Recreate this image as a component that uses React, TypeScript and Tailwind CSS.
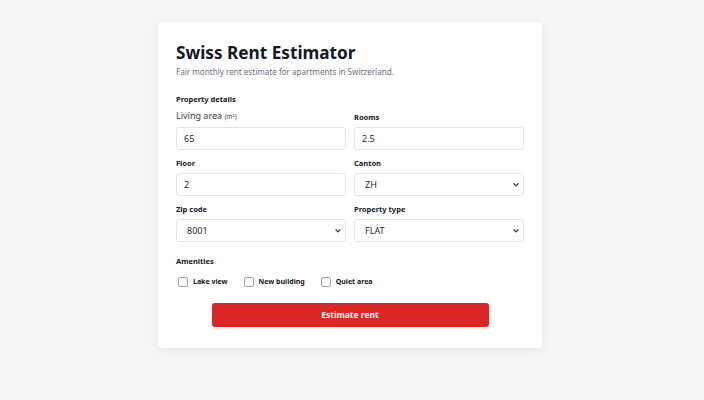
import React from "react"

const inputCls =
  "block h-[23px] w-full rounded-[3px] border border-[#e3e5e8] bg-white px-[7px] text-[9px] text-[#1f2937] outline-none"

function Label({ children }: { children: React.ReactNode }) {
  return <label className="mb-[5px] block text-[7.5px] font-bold leading-[10px] text-[#111827]">{children}</label>
}

function Select({ value, options }: { value: string; options: string[] }) {
  return (
    <div className="relative">
      <select className={inputCls + " appearance-none pl-[10px]"} defaultValue={value}>
        {options.map((o) => (
          <option key={o}>{o}</option>
        ))}
      </select>
      <svg
        className="pointer-events-none absolute right-[5px] top-1/2 h-[5px] w-[6px] -translate-y-1/2"
        viewBox="0 0 6 5"
        fill="none"
      >
        <path d="M1 1.2 3 3.4 5 1.2" stroke="#374151" strokeWidth="1.3" strokeLinecap="round" strokeLinejoin="round" />
      </svg>
    </div>
  )
}

export default function App() {
  return (
    <div className="min-h-[400px] bg-[#f5f6f8] pt-[22px]" style={{ fontFamily: '"Noto Sans", "Open Sans", sans-serif' }}>
      <div className="mx-auto w-[384px] translate-x-[-2px] rounded-[4px] bg-white px-[18px] pb-[21px] pt-[19px] shadow-[0_2px_10px_rgba(17,24,39,0.08)]">
        <h1 className="text-[17.2px] font-bold leading-[24px] text-[#111827]">Swiss Rent Estimator</h1>
        <p className="mt-[1px] text-[8.1px] leading-[12px] text-[#6b7280]">
          Fair monthly rent estimate for apartments in Switzerland.
        </p>

        <h2 className="mt-[16px] text-[7.5px] font-bold leading-[10px] text-[#111827]">Property details</h2>

        <div className="mt-[6px] grid grid-cols-2 gap-x-[8px] gap-y-[8px]">
          <div>
            <label className="mb-[4px] block text-[9px] leading-[12px] text-[#374151]">
              Living area <span className="text-[6.5px]">(m²)</span>
            </label>
            <input className={inputCls} defaultValue="65" />
          </div>
          <div className="flex flex-col justify-end">
            <Label>Rooms</Label>
            <input className={inputCls} defaultValue="2.5" />
          </div>
          <div>
            <Label>Floor</Label>
            <input className={inputCls} defaultValue="2" />
          </div>
          <div>
            <Label>Canton</Label>
            <Select value="ZH" options={["ZH", "BE", "GE", "VD"]} />
          </div>
          <div>
            <Label>Zip code</Label>
            <Select value="8001" options={["8001", "8002", "8003"]} />
          </div>
          <div>
            <Label>Property type</Label>
            <Select value="FLAT" options={["FLAT", "HOUSE"]} />
          </div>
        </div>

        <h2 className="mt-[14px] text-[7.5px] font-bold leading-[10px] text-[#111827]">Amenities</h2>
        <div className="mt-[11px] flex items-center gap-[16px] pl-[2px]">
          {["Lake view", "New building", "Quiet area"].map((a) => (
            <label key={a} className="flex items-center gap-[5px] text-[7px] font-bold leading-[10px] text-[#111827]">
              <span className="h-[10px] w-[10px] rounded-[2px] border border-[#9ca3af] bg-white" />
              {a}
            </label>
          ))}
        </div>

        <div className="mt-[16px] flex justify-center">
          <button className="h-[24px] w-[277px] rounded-[3px] bg-[#dc2626] text-[8.5px] font-bold text-white">
            Estimate rent
          </button>
        </div>
      </div>
    </div>
  )
}
